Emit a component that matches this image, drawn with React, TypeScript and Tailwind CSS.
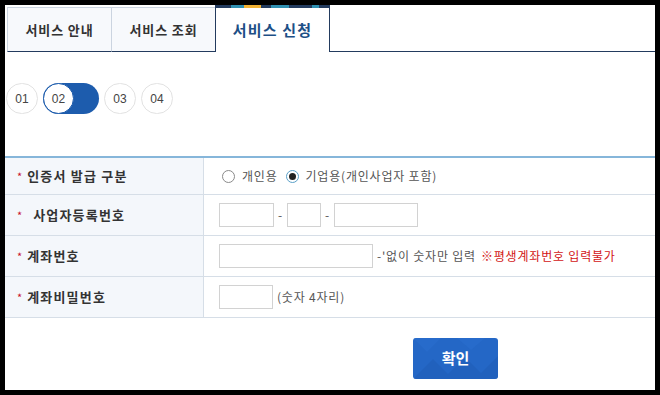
import React from 'react';

const kr = "font-['Noto_Sans_CJK_KR',sans-serif]";

function Tab({ label }: { label: string }) {
  return (
    <div className="flex h-[45px] w-[105px] items-center justify-center border border-[#cbd4e0] border-b-[#233b5e] bg-[#f7f9fc] text-[13px] font-semibold tracking-[0.9px] text-[#333] -ml-px first:ml-0">
      {label}
    </div>
  );
}

function ActiveTab() {
  return (
    <div className="flex h-[47px] w-[115px] flex-col border-x border-[#233b5e] bg-white -ml-px">
      {/* coloured strip on top of the selected tab */}
      <div className="flex h-[3px] w-full">
        <div className="w-[15px] bg-[#233b5e]" />
        <div className="w-[13px] bg-[#2e8fb0]" />
        <div className="w-[17px] bg-[#f2b233]" />
        <div className="w-[10px] bg-[#233b5e]" />
        <div className="w-[18px] bg-[#2e8fb0]" />
        <div className="w-[23px] bg-[#233b5e]" />
        <div className="w-[7px] bg-[#2e8fb0]" />
        <div className="flex-1 bg-[#233b5e]" />
      </div>
      <div className="flex flex-1 items-center justify-center pt-[1px] text-[15px] font-semibold tracking-[1.2px] text-[#1d4f86]">
        서비스 신청
      </div>
    </div>
  );
}

function Step({ n }: { n: string }) {
  return (
    <div className="flex h-[31px] w-[32px] items-center justify-center rounded-full border border-[#e2e2e2] bg-white font-['Liberation_Sans_Narrow','Liberation_Sans',sans-serif] text-[12px] text-[#444]">
      {n}
    </div>
  );
}

function Row({ label, indent, children, h }: { label: string; indent?: boolean; children: React.ReactNode; h: string }) {
  return (
    <div className={`grid grid-cols-[199px_1fr] border-b border-[#d6dee7] ${h}`}>
      <div className="flex items-center border-r border-[#d6dee7] bg-[#f4f7fb] pl-[12px]">
        <span className="mr-[5px] text-[11px] text-[#c8102e]">*</span>
        <span className={`${indent ? 'pl-[6px]' : ''} text-[13px] font-bold tracking-[1.2px] text-[#333]`}>{label}</span>
      </div>
      <div className="flex items-center pl-[15px] text-[12px] tracking-[0.8px] text-[#555]">{children}</div>
    </div>
  );
}

function Input({ w }: { w: string }) {
  return <div className={`h-[24px] ${w} border border-[#d2d2d2] bg-white`} />;
}

function Radio({ checked }: { checked?: boolean }) {
  return (
    <span
      className={`flex h-[13px] w-[13px] shrink-0 items-center justify-center rounded-full border ${
        checked ? 'border-[#5aa0c8]' : 'border-[#8a8a8a]'
      } bg-white`}
    >
      {checked && <span className="h-[7px] w-[7px] rounded-full bg-[#222]" />}
    </span>
  );
}

export default function App() {
  return (
    <div className={`h-[395px] w-[660px] bg-black p-[5px] ${kr}`}>
      <div className="flex h-[385px] flex-col bg-white">
        {/* tabs */}
        <div className="flex h-[47px] items-end pl-[2px]">
          <Tab label="서비스 안내" />
          <Tab label="서비스 조회" />
          <ActiveTab />
          <div className="h-[1px] flex-1 bg-[#233b5e]" />
        </div>

        {/* steps */}
        <div className="mt-[31px] flex items-center pl-[1px]">
          <Step n="01" />
          <div className="ml-[5px] flex h-[31px] w-[56px] items-center rounded-full bg-[#1d5cad]">
            <div className="flex h-[31px] w-[31px] items-center justify-center rounded-full border border-[#1d5cad] bg-white font-['Liberation_Sans_Narrow','Liberation_Sans',sans-serif] text-[12px] text-[#444]">
              02
            </div>
          </div>
          <div className="ml-[5px]">
            <Step n="03" />
          </div>
          <div className="ml-[5px]">
            <Step n="04" />
          </div>
        </div>

        {/* form table */}
        <div className="mt-[42px] border-t-2 border-[#86b6da]">
          <Row label="인증서 발급 구분" h="h-[37px]">
            <div className="flex items-center pl-[3px]">
              <Radio />
              <span className="ml-[7px]">개인용</span>
              <span className="ml-[8px]">
                <Radio checked />
              </span>
              <span className="ml-[7px]">기업용(개인사업자 포함)</span>
            </div>
          </Row>
          <Row label="사업자등록번호" indent h="h-[41px]">
            <Input w="w-[55px]" />
            <span className="mx-[4px]">-</span>
            <Input w="w-[34px]" />
            <span className="mx-[4px]">-</span>
            <Input w="w-[84px]" />
          </Row>
          <Row label="계좌번호" h="h-[41px]">
            <Input w="w-[154px]" />
            <span className="ml-[4px]">-'없이 숫자만 입력</span>
            <span className="ml-[5px] text-[#d21414]">※평생계좌번호 입력불가</span>
          </Row>
          <Row label="계좌비밀번호" h="h-[41px]">
            <Input w="w-[54px]" />
            <span className="ml-[4px]">(숫자 4자리)</span>
          </Row>
        </div>

        {/* submit */}
        <div className="mt-[20px] flex pl-[408px]">
          <button className="relative flex h-[41px] w-[85px] items-center justify-center overflow-hidden rounded-[3px] bg-[#2467c6] text-[15px] font-bold text-white">
            <svg className="absolute inset-0" width="85" height="41" viewBox="0 0 85 41">
              <path d="M0 41 L20 21 L40 41 Z M30 41 L52 19 L74 41 Z M62 41 L85 18 L85 41 Z" fill="#1f5db8" opacity="0.6" />
              <path d="M0 0 L14 14 L28 0 Z M44 0 L58 12 L72 0 Z" fill="#2a70d0" opacity="0.5" />
            </svg>
            <span className="relative">확인</span>
          </button>
        </div>
      </div>
    </div>
  );
}
